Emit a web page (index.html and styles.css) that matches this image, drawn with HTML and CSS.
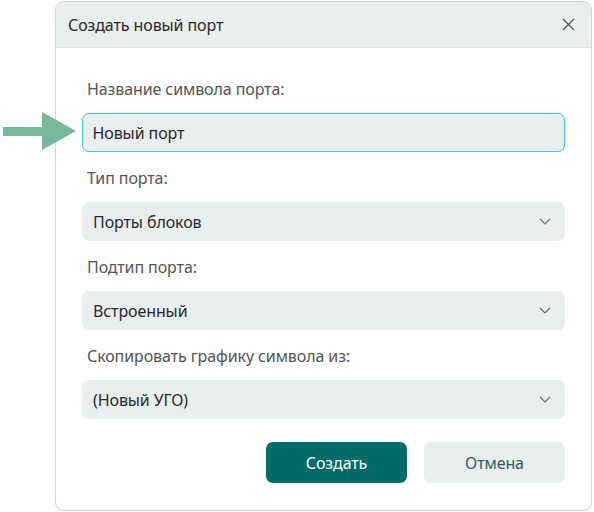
FILE: index.html
```html
<!DOCTYPE html>
<html lang="ru">
<head>
<meta charset="utf-8">
<title>Создать новый порт</title>
<link rel="stylesheet" href="styles.css">
</head>
<body>
<div class="page">
  <svg class="pointer" width="80" height="42" viewBox="0 0 80 42">
    <polygon points="3,15 42,15 42,0 76,19 42,38 42,24 3,24" fill="#78b89a"/>
  </svg>
  <div class="dialog">
    <div class="header">
      <span class="title">Создать новый порт</span>
      <svg class="close" width="13" height="13" viewBox="0 0 13 13">
        <path d="M1 1 L12 12 M12 1 L1 12" stroke="#555" stroke-width="1.3" fill="none"/>
      </svg>
    </div>
    <div class="body">
      <div class="field">
        <div class="label">Название символа порта:</div>
        <div class="input focused">Новый порт</div>
      </div>
      <div class="field">
        <div class="label">Тип порта:</div>
        <div class="input select">Порты блоков<svg class="chev" width="12" height="7" viewBox="0 0 12 7"><path d="M1 1 L6 6 L11 1" stroke="#6a6a6a" stroke-width="1.2" fill="none"/></svg></div>
      </div>
      <div class="field">
        <div class="label">Подтип порта:</div>
        <div class="input select">Встроенный<svg class="chev" width="12" height="7" viewBox="0 0 12 7"><path d="M1 1 L6 6 L11 1" stroke="#6a6a6a" stroke-width="1.2" fill="none"/></svg></div>
      </div>
      <div class="field">
        <div class="label">Скопировать графику символа из:</div>
        <div class="input select">(Новый УГО)<svg class="chev" width="12" height="7" viewBox="0 0 12 7"><path d="M1 1 L6 6 L11 1" stroke="#6a6a6a" stroke-width="1.2" fill="none"/></svg></div>
      </div>
      <div class="actions">
        <button class="btn primary">Создать</button>
        <button class="btn secondary">Отмена</button>
      </div>
    </div>
  </div>
</div>
</body>
</html>
```
FILE: styles.css
```css
* { box-sizing: border-box; }
html, body { margin: 0; padding: 0; background: #ffffff; }
body {
  font-family: "Noto Sans", "Open Sans", "DejaVu Sans", sans-serif;
  font-size: 16px;
  color: #2a2a2a;
}
.page {
  position: relative;
  width: 594px;
  height: 512px;
  padding: 1px 2px 0 55px;
}
.pointer {
  position: absolute;
  left: 0;
  top: 112px;
}
.dialog {
  width: 537px;
  height: 510px;
  border: 1px solid #cfd3d3;
  border-radius: 9px;
  overflow: hidden;
  background: #fff;
  display: flex;
  flex-direction: column;
}
.header {
  height: 46px;
  background: #e9eeee;
  border-bottom: 1px solid #dde2e2;
  display: flex;
  align-items: center;
  justify-content: space-between;
  padding: 0 16px 0 12px;
  flex: none;
}
.title {
  font-size: 16px;
  color: #2a2a2a;
  letter-spacing: -0.1px;
}
.close { display: block; }
.body {
  padding: 27px 26px 0 26px;
  display: flex;
  flex-direction: column;
}
.field {
  display: flex;
  flex-direction: column;
  margin-bottom: 12px;
}
.label {
  padding-left: 5px;
  padding-top: 2px;
  color: #555;
  height: 27px;
  line-height: 25px;
  margin-bottom: 11px;
  letter-spacing: -0.1px;
}
.input {
  height: 39px;
  border-radius: 7px;
  background: #e9eeee;
  display: flex;
  align-items: center;
  justify-content: space-between;
  padding: 0 14px 0 11px;
  color: #2a2a2a;
  letter-spacing: -0.1px;
}
.input.focused {
  border: 1.5px solid #3fc6c6;
  padding-left: 9.5px;
}
.chev { display: block; }
.actions {
  display: flex;
  justify-content: flex-end;
  gap: 17px;
  margin-top: 11px;
}
.btn {
  width: 141px;
  height: 41px;
  border: none;
  border-radius: 7px;
  font-family: inherit;
  font-size: 16px;
  letter-spacing: -0.1px;
}
.primary { background: #006b68; color: #fff; }
.secondary { background: #e9eeee; color: #2a5e66; }
```
